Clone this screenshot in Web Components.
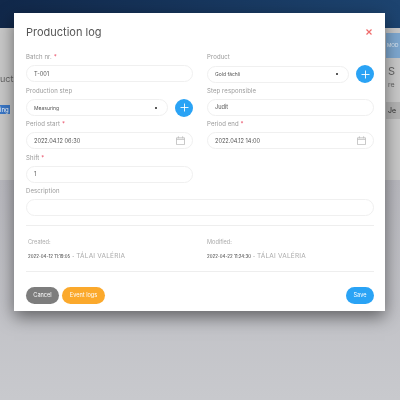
<!DOCTYPE html>
<html>
<head>
<meta charset="utf-8">
<title>Production log</title>
<style>
  html, body { margin: 0; height: 100%; overflow: hidden; }
  body { font-family: "Inter", "Liberation Sans", sans-serif; }
</style>
</head>
<body>
<app-backdrop>
  <log-dialog heading="Production log">
    <form-field label="Batch nr." required value="T-001" slot="left"></form-field>
    <form-field label="Product" value="Gold fáchli" kind="select" small add slot="right"></form-field>
    <form-field label="Production step" value="Measuring" kind="select" small add slot="left"></form-field>
    <form-field label="Step responsible" value="Judit" slot="right"></form-field>
    <form-field label="Period start" required value="2022.04.12 06:30" kind="date" slot="left"></form-field>
    <form-field label="Period end" required value="2022.04.12 14:00" kind="date" slot="right"></form-field>
    <form-field label="Shift" required value="1" slot="left"></form-field>
    <form-field label="Description" slot="wide"></form-field>
    <audit-stamp label="Created:" time="2022-04-12 11:19:05" user="TÁLAI VALÉRIA" slot="audit"></audit-stamp>
    <audit-stamp label="Modified:" time="2022-04-22 11:24:30" user="TÁLAI VALÉRIA" slot="audit"></audit-stamp>
    <pill-button tone="grey" slot="actions">Cancel</pill-button>
    <pill-button tone="orange" slot="actions">Event logs</pill-button>
    <pill-button tone="blue" slot="save">Save</pill-button>
  </log-dialog>
</app-backdrop>
<script>
class AppBackdrop extends HTMLElement {
  connectedCallback() {
    this.attachShadow({ mode: 'open' });
    this.shadowRoot.innerHTML = `
      <style>
        :host { display: flex; flex-direction: column; width: 400px; height: 400px; position: relative; overflow: hidden; background: #c6c7cb; color: #333; filter: blur(.35px); }
        .top { height: 28px; background: linear-gradient(90deg, #11284a, #1d4470); }
        .card { height: 152px; background: #c9c9c9; display: flex; justify-content: space-between; }
        .left, .right { display: flex; flex-direction: column; width: 14px; overflow: hidden; white-space: nowrap; }
        .uct { margin-top: 45px; font-size: 9px; line-height: 12px; color: #666; }
        .sel { margin-top: 20px; height: 9px; width: 10px; font-size: 6px; line-height: 9px; background: #3a78c8; color: #fff; }
        .mod { margin-top: 5px; height: 25px; padding-left: 1px; background: #7ea8d0; color: #e4edf5; font-size: 4.8px; line-height: 25px; }
        .s { margin-top: 6px; padding-left: 2px; font-size: 11px; line-height: 14px; color: #666; }
        .re { margin-top: 2px; padding-left: 2px; font-size: 7px; line-height: 10px; color: #666; }
        .je { margin-top: 12px; height: 17px; padding-left: 2px; background: #b4b4b4; color: #333; font-size: 7px; line-height: 17px; }
        .rest { flex: 1; background: linear-gradient(180deg, #b9b9bf, #c8c9cd); }
        .modal { position: absolute; left: 14px; top: 13px; }
      </style>
      <div class="top"></div>
      <div class="card">
        <div class="left">
          <div class="uct">uct</div>
          <div class="sel">ing</div>
        </div>
        <div class="right">
          <div class="mod">MOD</div>
          <div class="s">S</div>
          <div class="re">re</div>
          <div class="je">Je</div>
        </div>
      </div>
      <div class="rest"></div>
      <div class="modal"><slot></slot></div>
    `;
  }
}
customElements.define('app-backdrop', AppBackdrop);

class LogDialog extends HTMLElement {
  connectedCallback() {
    this.attachShadow({ mode: 'open' });
    this.shadowRoot.innerHTML = `
      <style>
        :host { display: block; width: 371px; height: 298px; box-sizing: border-box; background: #fff; padding: 12px 11px 0 12px; box-shadow: 0 6px 16px rgba(0,0,0,.5); }
        .head { display: flex; justify-content: space-between; align-items: center; height: 14px; margin-bottom: 10px; }
        h1 { margin: 0; font-size: 11px; font-weight: 400; color: #555; }
        svg { display: block; margin-right: 2px; }
        .grid { display: grid; grid-template-columns: 167px 167px; column-gap: 14px; align-items: start; }
        .col { display: flex; flex-direction: column; }
        .audit { display: grid; grid-template-columns: 179px 1fr; margin: 8px 0 0; padding: 10px 2px 0; height: 47px; box-sizing: border-box; border-top: 1px solid #eee; border-bottom: 1px solid #eee; }
        .foot { display: flex; justify-content: space-between; margin-top: 15px; }
        .acts { display: flex; gap: 3px; }
      </style>
      <div class="head">
        <h1>${this.getAttribute('heading')}</h1>
        <svg width="6" height="6" viewBox="0 0 6 6"><path d="M.5.5l5 5M5.5.5l-5 5" stroke="#ef6a6a" stroke-width="1.2"/></svg>
      </div>
      <div class="grid">
        <div class="col"><slot name="left"></slot></div>
        <div class="col"><slot name="right"></slot></div>
      </div>
      <div><slot name="wide"></slot></div>
      <div class="audit"><slot name="audit"></slot></div>
      <div class="foot">
        <div class="acts"><slot name="actions"></slot></div>
        <slot name="save"></slot>
      </div>
    `;
  }
}
customElements.define('log-dialog', LogDialog);

class FormField extends HTMLElement {
  connectedCallback() {
    const kind = this.getAttribute('kind');
    const req = this.hasAttribute('required') ? ' <b>*</b>' : '';
    const tail = kind === 'select'
      ? '<i class="dot"></i>'
      : kind === 'date'
        ? `<svg width="9" height="9" viewBox="0 0 9 9" fill="none" stroke="#bbb" stroke-width=".8"><path d="M.5 1.8h8v6.8h-8zM.5 3.4h8M2.4.3v2M6.6.3v2"/></svg>`
        : '';
    const add = this.hasAttribute('add')
      ? `<span class="add"><svg width="9" height="9" viewBox="0 0 9 9"><path d="M4.5 .5v8M.5 4.5h8" stroke="#fff" stroke-width=".9"/></svg></span>`
      : '';
    this.attachShadow({ mode: 'open' });
    this.shadowRoot.innerHTML = `
      <style>
        :host { display: block; height: 33.5px; }
        label { display: block; font-size: 6px; line-height: 9px; color: #999; height: 9px; padding-top: 3px; margin-bottom: 4px; letter-spacing: .1px; white-space: nowrap; }
        label b { color: #e8455f; font-weight: 400; }
        .line { display: flex; align-items: center; gap: 7px; }
        .box { flex: 1; min-width: 0; height: 17px; box-sizing: border-box; border: 1px solid #f0f0f0; border-radius: 9px; display: flex; justify-content: space-between; align-items: center; padding: 0 7px 0 7px; font-size: 5.6px; color: #555; white-space: nowrap; }
        :host([small]) .box { font-size: 5px; }
        .dot { width: 2px; height: 2px; border-radius: 50%; background: #222; margin-right: 3px; }
        .add { flex: none; width: 18px; height: 18px; border-radius: 50%; background: #2aa3f5; display: flex; align-items: center; justify-content: center; }
      </style>
      <label>${this.getAttribute('label')}${req}</label>
      <div class="line">
        <div class="box"><span>${this.getAttribute('value') || ''}</span>${tail}</div>
        ${add}
      </div>
    `;
  }
}
customElements.define('form-field', FormField);

class AuditStamp extends HTMLElement {
  connectedCallback() {
    this.attachShadow({ mode: 'open' });
    this.shadowRoot.innerHTML = `
      <style>
        :host { display: block; font-size: 5.6px; }
        .lab { color: #aaa; line-height: 8px; margin-bottom: 5px; margin-top: 2px; }
        .row { display: flex; align-items: baseline; gap: 2px; color: #333; font-size: 4.4px; line-height: 10px; white-space: nowrap; }
        .who { color: #aaa; font-size: 6.5px; letter-spacing: .2px; }
      </style>
      <div class="lab">${this.getAttribute('label')}</div>
      <div class="row"><span>${this.getAttribute('time')}</span> - <span class="who">${this.getAttribute('user')}</span></div>
    `;
  }
}
customElements.define('audit-stamp', AuditStamp);

class PillButton extends HTMLElement {
  connectedCallback() {
    this.attachShadow({ mode: 'open' });
    this.shadowRoot.innerHTML = `
      <style>
        :host { display: flex; align-items: center; justify-content: center; box-sizing: border-box; height: 17px; border-radius: 9px; color: #fff; font-size: 5.6px; white-space: nowrap; }
        :host([tone=grey]) { background: #7d7d7d; width: 33px; }
        :host([tone=orange]) { background: #fba92c; width: 43px; }
        :host([tone=blue]) { background: #2aa3f5; width: 28px; }
      </style>
      <slot></slot>
    `;
  }
}
customElements.define('pill-button', PillButton);
</script>
</body>
</html>
